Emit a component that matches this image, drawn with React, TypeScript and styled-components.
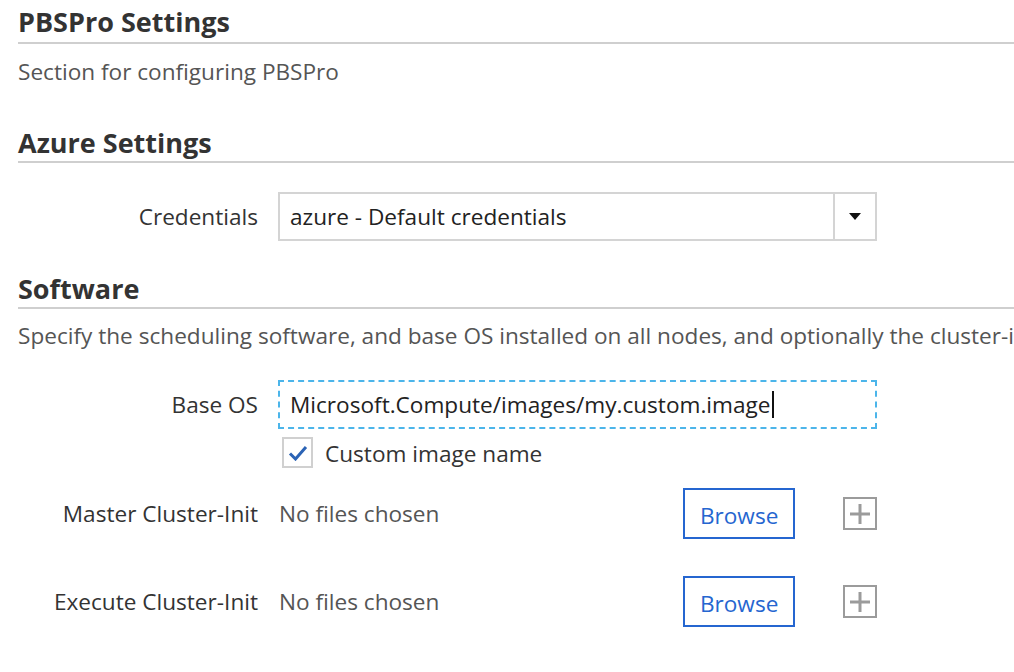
import React from "react";
import styled, { createGlobalStyle } from "styled-components";

const Global = createGlobalStyle`
  html, body { margin: 0; padding: 0; background: #fff; }
  body { font-family: "Segoe UI", "Open Sans", "Noto Sans", sans-serif; color: #333; }
  * { box-sizing: border-box; }
`;

const Page = styled.div`
  width: 1014px;
  height: 672px;
  overflow: hidden;
  padding: 7px 0 0 18px;
`;

const Heading = styled.h2<{ $top: number; $pad: number }>`
  margin: ${(p) => p.$top}px 0 0 0;
  font-size: 27px;
  font-weight: 700;
  line-height: 30px;
  color: #333;
  padding-bottom: ${(p) => p.$pad}px;
  border-bottom: 2px solid #cfcfcf;
`;

const Description = styled.p<{ $top: number }>`
  margin: ${(p) => p.$top}px 0 0 0;
  font-size: 22.6px;
  line-height: 30px;
  color: #555;
  white-space: nowrap;
`;

const Row = styled.div<{ $top: number; $height: number }>`
  display: grid;
  grid-template-columns: 240px 599px;
  column-gap: 20px;
  align-items: center;
  margin-top: ${(p) => p.$top}px;
  height: ${(p) => p.$height}px;
`;

const Label = styled.label`
  text-align: right;
  font-size: 22.6px;
  color: #333;
  white-space: nowrap;
`;

const Select = styled.div`
  display: flex;
  height: 49px;
  border: 2px solid #d4d4d4;
  background: #fff;
`;

const SelectValue = styled.div`
  flex: 1;
  display: flex;
  align-items: center;
  padding-left: 10px;
  font-size: 22.6px;
  color: #222;
`;

const SelectArrow = styled.div`
  width: 42px;
  border-left: 2px solid #d4d4d4;
  display: flex;
  align-items: center;
  justify-content: center;
`;

const TextInput = styled.div`
  height: 49px;
  border: 2px dashed #4cb5ea;
  display: flex;
  align-items: center;
  padding-left: 10px;
  font-size: 22.6px;
  color: #222;
  white-space: nowrap;
`;

const Caret = styled.span`
  display: inline-block;
  width: 2px;
  height: 27px;
  background: #111;
  margin-left: 1px;
`;

const CheckRow = styled.div`
  display: flex;
  align-items: center;
  gap: 12px;
  margin-left: 4px;
  font-size: 22.6px;
  color: #333;
  padding-top: 2px;
`;

const CheckBox = styled.span`
  width: 31px;
  height: 31px;
  margin-top: -2px;
  border: 2px solid #d0d0d0;
  display: flex;
  align-items: center;
  justify-content: center;
`;

const FileControl = styled.div`
  display: flex;
  align-items: center;
  height: 51px;
`;

const NoFiles = styled.span`
  font-size: 22.6px;
  color: #555;
  padding-left: 1px;
  width: 406px;
  white-space: nowrap;
`;

const BrowseButton = styled.button`
  width: 112px;
  height: 51px;
  border: 2px solid #2566d0;
  background: #fff;
  color: #2566d0;
  font-family: inherit;
  font-size: 22.6px;
  padding: 3px 0 0 0;
`;

const AddBox = styled.span`
  margin-left: 48px;
  width: 34px;
  height: 33px;
  border: 2px solid #9b9b9b;
  display: flex;
  align-items: center;
  justify-content: center;
`;

function FileRow({ label, top }: { label: string; top: number }) {
  return (
    <Row $top={top} $height={51}>
      <Label>{label}</Label>
      <FileControl>
        <NoFiles>No files chosen</NoFiles>
        <BrowseButton>Browse</BrowseButton>
        <AddBox>
          <svg width="22" height="22" viewBox="0 0 22 22">
            <path d="M11 1v20M1 11h20" stroke="#9b9b9b" strokeWidth="3" />
          </svg>
        </AddBox>
      </FileControl>
    </Row>
  );
}

export default function App() {
  return (
    <>
      <Global />
      <Page>
        <Heading $top={0} $pad={5}>PBSPro Settings</Heading>
        <Description $top={13}>Section for configuring PBSPro</Description>

        <Heading $top={41} $pad={3}>Azure Settings</Heading>
        <Row $top={29} $height={49}>
          <Label>Credentials</Label>
          <Select>
            <SelectValue>azure - Default credentials</SelectValue>
            <SelectArrow>
              <svg width="12" height="7" viewBox="0 0 12 7">
                <path d="M0 0h12L6 7z" fill="#111" />
              </svg>
            </SelectArrow>
          </Select>
        </Row>

        <Heading $top={33} $pad={3}>Software</Heading>
        <Description $top={12}>
          Specify the scheduling software, and base OS installed on all nodes, and optionally the cluster-init files
        </Description>

        <Row $top={29} $height={49}>
          <Label>Base OS</Label>
          <TextInput>
            Microsoft.Compute/images/my.custom.image
            <Caret />
          </TextInput>
        </Row>
        <Row $top={7} $height={31}>
          <span />
          <CheckRow>
            <CheckBox>
              <svg width="20" height="16" viewBox="0 0 20 16">
                <path d="M2 8.5l5.5 5.5L18 2" stroke="#2b63b5" strokeWidth="3" fill="none" />
              </svg>
            </CheckBox>
            Custom image name
          </CheckRow>
        </Row>
        <FileRow label="Master Cluster-Init" top={21} />
        <FileRow label="Execute Cluster-Init" top={37} />
      </Page>
    </>
  );
}
